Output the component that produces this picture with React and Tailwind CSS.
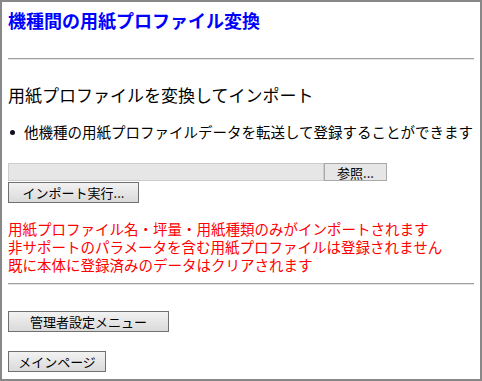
export default function App() {
  const font = { fontFamily: '"Noto Sans CJK JP", "Noto Sans", sans-serif' };
  const btn =
    "flex items-center justify-center h-[21px] border border-[#707070] bg-gradient-to-b from-[#f2f2f2] to-[#dadada] text-[13px] leading-none text-black";
  return (
    <div
      className="w-[482px] h-[381px] border-2 border-[#888888] bg-white px-[6px] pt-[6px] box-border overflow-hidden"
      style={font}
    >
      <div className="text-[18px] leading-[24px] font-bold text-[#0000ff] whitespace-nowrap">
        機種間の用紙プロファイル変換
      </div>
      <div className="mt-[26px] border-t border-t-[#a0a0a0] border-b border-b-[#e4e4e4]" />
      <div className="mt-[23px] text-[17px] leading-[24px] text-black whitespace-nowrap">
        用紙プロファイルを変換してインポート
      </div>
      <div className="mt-[15px] flex items-center h-[20px] text-[14.5px] leading-[20px] text-black whitespace-nowrap">
        <span className="ml-[2px] w-[5px] h-[5px] rounded-full bg-[#101020] shrink-0" />
        <span className="ml-[9px]">他機種の用紙プロファイルデータを転送して登録することができます</span>
      </div>
      <div className="mt-[21px] flex h-[18px]">
        <div className="w-[316px] h-[18px] bg-[#e6e6e6] border border-[#cccccc]" />
        <div className="w-[63px] h-[18px] bg-[#e6e6e6] border border-[#aaaaaa] flex items-center justify-center text-[13px] leading-none text-black">
          参照...
        </div>
      </div>
      <div className={`mt-[1px] w-[131px] ${btn}`}>インポート実行...</div>
      <div className="mt-[17px] text-[14.5px] leading-[18px] text-[#ff0000] whitespace-nowrap">
        <div>用紙プロファイル名・坪量・用紙種類のみがインポートされます</div>
        <div>非サポートのパラメータを含む用紙プロファイルは登録されません</div>
        <div>既に本体に登録済みのデータはクリアされます</div>
      </div>
      <div className="mt-[9px] border-t border-t-[#a0a0a0] border-b border-b-[#e4e4e4]" />
      <div className={`mt-[26px] w-[161px] ${btn}`}>管理者設定メニュー</div>
      <div className={`mt-[19px] w-[98px] ${btn}`}>メインページ</div>
    </div>
  );
}
